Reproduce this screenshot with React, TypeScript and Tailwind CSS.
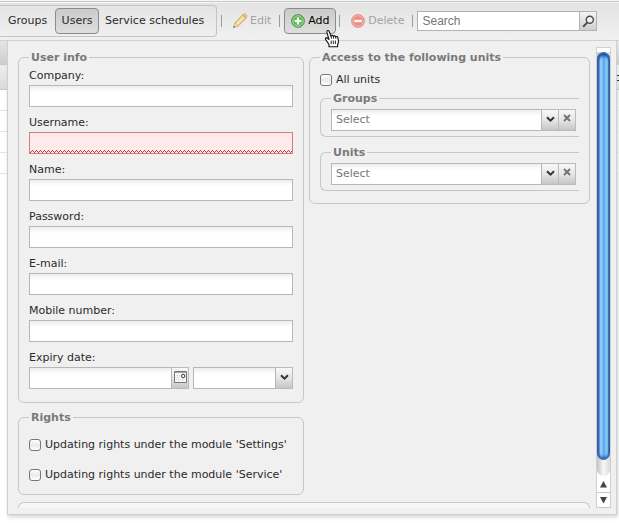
import React from 'react';

const fields = [
  { id: 'company', label: 'Company:', type: 'text' },
  { id: 'username', label: 'Username:', type: 'text', invalid: true },
  { id: 'name', label: 'Name:', type: 'text' },
  { id: 'password', label: 'Password:', type: 'password' },
  { id: 'email', label: 'E-mail:', type: 'email' },
  { id: 'mobile', label: 'Mobile number:', type: 'tel' },
];

const inputClass = 'block h-[22px] w-full min-w-0 border border-[#b5b8b8] bg-linear-to-b from-[#ededed] via-white via-30% to-white px-1 pt-px outline-none';
const triggerClass = 'flex h-[22px] w-[17px] shrink-0 items-center justify-center border border-l-0 border-[#b9bcbc] bg-linear-to-b from-[#f8f8f8] via-[#e6e6e6] to-[#c6c6c6]';

const PencilIcon = () => (
  <svg width="16" height="16" viewBox="0 0 16 16" opacity="0.65" aria-hidden="true">
    <path d="M1.5 14.5 3 10 10.5 2 14 5.2 6.3 13Z" fill="#f5c65e" stroke="#b57f2b" strokeWidth="1" strokeLinejoin="round" />
    <path d="M4.5 11.5 12 3.6" stroke="#fff0b8" strokeWidth="1.4" />
    <path d="m10.5 2 1-.9c.8-.6 1.7-.4 2.5.3.9.8 1.1 1.8.5 2.6l-.7 1Z" fill="#e9a66c" stroke="#b57f2b" strokeWidth=".8" />
    <path d="M1.5 14.5 3 10l3.3 3Z" fill="#f3e1bd" stroke="#a98a55" strokeWidth=".7" />
    <path d="m1.2 14.8.7-2 1.4 1.3Z" fill="#444" />
  </svg>
);

const AddIcon = () => (
  <svg width="14" height="14" viewBox="0 0 14 14" aria-hidden="true">
    <circle cx="7" cy="7" r="6.4" fill="#46a746" stroke="#3a8f3e" strokeWidth=".8" />
    <circle cx="7" cy="7" r="5.3" fill="#5dbb56" stroke="#b4e0a8" strokeWidth=".9" />
    <path d="M7 3.6v6.8M3.6 7h6.8" stroke="#fff" strokeWidth="2.2" />
  </svg>
);

const DeleteIcon = () => (
  <svg width="14" height="14" viewBox="0 0 14 14" aria-hidden="true">
    <circle cx="7" cy="7" r="6.4" fill="#ec8a80" stroke="#e58378" strokeWidth=".8" />
    <circle cx="7" cy="7" r="5.3" fill="#ee8c82" stroke="#f7bdb5" strokeWidth=".9" />
    <path d="M3.4 7h7.2" stroke="#fff" strokeWidth="2.4" />
  </svg>
);

const SearchIcon = () => (
  <svg width="13" height="13" viewBox="0 0 13 13" fill="none" aria-hidden="true">
    <circle cx="7.8" cy="4.8" r="3.5" fill="#f4f4f4" stroke="#4a4a4a" strokeWidth="1.4" />
    <path d="M5.2 7.6 1.2 11.8" stroke="#4a4a4a" strokeWidth="2" />
  </svg>
);

const ChevronIcon = () => (
  <svg className="mb-0.5" width="9" height="7" viewBox="0 0 9 7" fill="none" aria-hidden="true">
    <path d="m1 1.3 3.5 3.4L8 1.3" stroke="#333" strokeWidth="2" />
  </svg>
);

const ClearIcon = () => (
  <svg className="mb-1" width="8" height="8" viewBox="0 0 8 8" fill="none" aria-hidden="true">
    <path d="m1 1 6 6M7 1 1 7" stroke="#707070" strokeWidth="1.8" />
  </svg>
);

const CalendarIcon = () => (
  <svg className="mb-0.5" width="13" height="13" viewBox="0 0 13 13" fill="none" aria-hidden="true">
    <path d="M.5.5h12v11H.5Z" fill="#f6f6f6" stroke="#777" />
    <path d="M1 1.5h11" stroke="#a5a5a5" />
    <path d="M2.5 4.5h4M2.5 6.5h4M2.5 8.5h8" stroke="#d0d0d0" strokeDasharray="1 1" />
    <circle cx="9.2" cy="5" r="1.7" fill="#fff" stroke="#333" />
  </svg>
);

const HandCursor = () => (
  <svg className="pointer-events-none absolute top-[21px] left-[40px] z-10" width="17" height="19" viewBox="0 0 17 19" aria-hidden="true">
    <path d="M5 17.7v-2.2L1.6 10.4c-.7-1.2.6-2.3 1.7-1.4L5 10.5 2.9 3.3C2.4 1.5 4.5.8 5.1 2.4L7 7.2c.5-1.2 2.2-1 2.4.2.7-1 2-.6 2.3.5.8-.8 2-.3 2.2.8l.6 3.4c.2 1.2-.5 2.4-.9 3.4v2.2Z" fill="#fff" stroke="#111" strokeWidth="1.1" strokeLinejoin="round" />
    <path d="M7.2 11.5v3.6M9.3 11.5v3.6M11.4 11.5v3.6M7 7.2l.6 2.5M9.4 7.5l.3 2.2M11.7 8l.2 1.8" stroke="#111" strokeWidth=".9" />
  </svg>
);

const Separator = () => <span className="h-3 w-px shrink-0 bg-[#9a9a9a]" />;

const Group: React.FC<{ title: string; className?: string; children: React.ReactNode }> = ({ title, className, children }) => (
  <fieldset className={`min-w-0 rounded-md border border-[#c6c8c8] px-[10px] ${className ?? ''}`}>
    <legend className="px-[2px] pt-px leading-[13px] font-bold text-[#7a7a7a]">{title}</legend>
    {children}
  </fieldset>
);

const CheckRow: React.FC<{ label: string }> = ({ label }) => (
  <label className="flex h-4 items-center gap-1 whitespace-nowrap">
    <input type="checkbox" className="size-3 shrink-0 appearance-none rounded-[3px] border border-[#777] bg-linear-to-b from-white via-[#e9e9e9] to-white" />
    {label}
  </label>
);

const UnitSelect: React.FC<{ title: string }> = ({ title }) => (
  <fieldset className="min-w-0 rounded-l-md border border-r-0 border-[#c6c8c8] pt-1 pr-[3px] pb-[5px] pl-[10px]">
    <legend className="px-[2px] pt-px leading-[13px] font-bold text-[#7a7a7a]">{title}</legend>
    <div className="flex">
      <select aria-label={title} className={`${inputClass} flex-1 appearance-none text-[#777]`}>
        <option>Select</option>
      </select>
      <span className={triggerClass}><ChevronIcon /></span>
      <button type="button" aria-label={`Clear ${title}`} className={triggerClass}><ClearIcon /></button>
    </div>
  </fieldset>
);

const Toolbar = () => (
  <header className="flex h-[41px] items-center border-b border-[#cfd2d2] bg-linear-to-b from-[#e2e2e2] to-[#f1f1f1] pt-[2px] shadow-[inset_0_1px_0_#f6f6f6,inset_0_2px_0_#c8caca,inset_0_3px_0_#f4f4f4]">
    <nav className="flex h-8 shrink-0 items-center rounded-r-[4px] border border-l-0 border-[#c3c5c5] pr-2 pl-2">
      <button type="button" className="w-[47px] text-left">Groups</button>
      <button type="button" className="h-[26px] w-11 rounded-[4px] border border-[#8c8c8c] bg-linear-to-b from-[#cbcbcb] to-[#dedede]">Users</button>
      <button type="button" className="ml-1.5 w-[103px] text-left whitespace-nowrap">Service schedules</button>
    </nav>
    <div className="ml-1 flex shrink-0 items-center">
      <Separator />
      <button type="button" className="mr-2 ml-2.5 flex items-center gap-0.5 text-[#a2a2a2]"><PencilIcon />Edit</button>
      <Separator />
      <div className="relative ml-1">
        <button type="button" className="flex h-[26px] w-[52px] items-center justify-center gap-[3px] rounded-[4px] border border-[#8c8c8c] bg-linear-to-b from-[#cbcbcb] to-[#dedede] text-black"><AddIcon />Add</button>
        <HandCursor />
      </div>
      <span className="ml-[3px] flex"><Separator /></span>
      <button type="button" className="mr-2 ml-[11px] flex items-center gap-[3px] text-[#a2a2a2]"><DeleteIcon />Delete</button>
      <Separator />
    </div>
    <form className="ml-1 flex w-[180px] shrink-0" onSubmit={(e) => e.preventDefault()}>
      <input type="search" aria-label="Search" placeholder="Search" className="h-5 min-w-0 flex-1 border border-[#b0b3b3] bg-white px-1 font-['Liberation_Sans',sans-serif] text-[12px] outline-none placeholder:text-[#777]" />
      <button type="submit" aria-label="Run search" className="flex h-5 w-[17px] items-center justify-center border border-l-0 border-[#b0b3b3] bg-linear-to-b from-[#f4f4f4] to-[#cecece]"><SearchIcon /></button>
    </form>
  </header>
);

const UserInfo = () => (
  <Group title="User info" className="pt-1 pb-[13px]">
    <div className="flex flex-col gap-2">
      {fields.map((f) => (
        <div key={f.id}>
          <label htmlFor={f.id} className="mb-px block leading-4">{f.label}</label>
          {f.invalid ? (
            <div className="relative">
              <input id={f.id} type={f.type} aria-invalid="true" className="block h-[22px] w-full border border-[#d87a7a] bg-[#ffeaea] px-1 outline-none" />
              <svg className="pointer-events-none absolute bottom-px left-px h-[3px] w-[calc(100%-2px)]" aria-hidden="true">
                <defs>
                  <pattern id="wave" width="4" height="3" patternUnits="userSpaceOnUse">
                    <path d="M0 2h1v1H0ZM1 1h1v1H1ZM2 0h1v1H2ZM3 1h1v1H3Z" fill="#c43c3c" />
                  </pattern>
                </defs>
                <rect width="100%" height="3" fill="url(#wave)" />
              </svg>
            </div>
          ) : (
            <input id={f.id} type={f.type} className={inputClass} />
          )}
        </div>
      ))}
      <div>
        <label htmlFor="expiry" className="mb-px block leading-4">Expiry date:</label>
        <div className="flex gap-1">
          <div className="flex min-w-0 flex-[160]">
            <input id="expiry" type="text" className={inputClass} />
            <button type="button" aria-label="Pick date" className={triggerClass}><CalendarIcon /></button>
          </div>
          <div className="flex min-w-0 flex-[100]">
            <select aria-label="Expiry time" className={`${inputClass} appearance-none`}>
              <option></option>
            </select>
            <span className={triggerClass}><ChevronIcon /></span>
          </div>
        </div>
      </div>
    </div>
  </Group>
);

const Scrollbar = () => (
  <div className="flex w-[15px] shrink-0 flex-col border-x border-t border-[#d0d0d0] bg-white pt-1">
    <div className="flex flex-1 flex-col rounded-b-full bg-linear-to-r from-[#c4c4c4] via-[#f7f7f7] to-[#dadada] pb-4">
      <div className="flex-1 rounded-full border border-[#2a5fa8] bg-[linear-gradient(90deg,#2f6fc4_0%,#a5d0f8_22%,#8cc2f5_38%,#5aa8ee_48%,#69b8f6_65%,#a4e4ff_85%,#3f7fae_100%)] shadow-[inset_0_3px_3px_#1d4f9f,inset_0_-2px_3px_#2860b0]" />
    </div>
    <button type="button" aria-label="Scroll up" className="flex h-4 items-center justify-center">
      <svg width="7" height="7" viewBox="0 0 7 7" aria-hidden="true"><path d="M3.5 0 7 6.5H0Z" fill="#444" /></svg>
    </button>
    <button type="button" aria-label="Scroll down" className="flex h-4 items-center justify-center border-y border-[#c8c8c8]">
      <svg width="7" height="7" viewBox="0 0 7 7" aria-hidden="true"><path d="M3.5 6.5 7 0H0Z" fill="#444" /></svg>
    </button>
  </div>
);

// Slice of the grid that stays visible beside the open panel
const GridEdge: React.FC<{ mark?: boolean }> = ({ mark }) => (
  <div className="overflow-hidden">
    <div className="h-[25px] border-b border-[#e8e8e8] bg-linear-to-b from-[#e6e6e6] to-[#cdcdcd]" />
    <div className="flex h-6 items-center border-b border-[#c4c4c4] bg-linear-to-b from-[#eeeeee] to-[#dadada]">
      {mark && <svg width="2" height="8" aria-hidden="true"><path d="M0 1.5h2M0 6.5h2" stroke="#333" /></svg>}
    </div>
    {[0, 1, 2, 3].map((row) => (
      <div key={row} className="h-[21px] border-b border-[#e4e4e4]" />
    ))}
  </div>
);

export default function App() {
  return (
    <div className="min-h-screen bg-white font-['DejaVu_Sans',Verdana,sans-serif] text-[11px] text-[#2b2b2b]">
      <Toolbar />
      <main className="grid grid-cols-[7px_1fr_2px]">
        <GridEdge />
        <section className="flex gap-1.5 border border-t-0 border-[#cfcfcf] bg-[#f0f0f0] pt-[6px] pr-[5px] pb-1.5 pl-[10px] shadow-[1px_2px_4px_#d4d4d4]">
          <form className="min-w-0 flex-1 pt-[3px]">
            <div className="grid grid-cols-[286fr_281fr] items-start gap-[5px]">
              <div className="flex min-w-0 flex-col gap-[7px]">
                <UserInfo />
                <Group title="Rights" className="pt-[13px] pb-[11px]">
                  <div className="flex flex-col gap-3.5">
                    <CheckRow label="Updating rights under the module 'Settings'" />
                    <CheckRow label="Updating rights under the module 'Service'" />
                  </div>
                </Group>
              </div>
              <Group title="Access to the following units" className="pt-2 pb-3">
                <CheckRow label="All units" />
                <div className="mt-[3px] flex flex-col gap-2">
                  <UnitSelect title="Groups" />
                  <UnitSelect title="Units" />
                </div>
              </Group>
            </div>
            <div className="mt-[7px] h-1.5 rounded-t-md border border-b-0 border-[#c6c8c8] bg-[#f6f6f6]" />
          </form>
          <Scrollbar />
        </section>
        <GridEdge mark />
      </main>
    </div>
  );
}
